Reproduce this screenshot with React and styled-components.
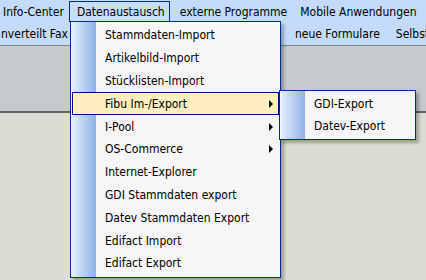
import React from "react";
import styled, { createGlobalStyle } from "styled-components";

const GlobalStyle = createGlobalStyle`
  html, body {
    margin: 0;
    padding: 0;
  }
  body {
    font-family: "DejaVu Sans Condensed", "DejaVu Sans", sans-serif;
    font-size: 12px;
    color: #000;
  }
`;

const Screen = styled.div`
  position: relative;
  width: 426px;
  height: 280px;
  overflow: hidden;
  background: #dcdcd4;
`;

const MenuBar = styled.div`
  display: flex;
  height: 22px;
  background: #c3daf9;
  margin-left: -5px;
  white-space: nowrap;
`;

const BarItem = styled.div`
  display: flex;
  align-items: center;
  padding: 0 4px 0 7px;
  margin-right: ${(p) => (p.$open ? 2 : 0)}px;
  border: 1px solid ${(p) => (p.$open ? "#002d96" : "transparent")};
  border-bottom: none;
  margin-top: 1px;
  background: ${(p) => (p.$open ? "#c9ddf8" : "transparent")};
`;

const ToolBar = styled.div`
  display: flex;
  height: 23px;
  align-items: center;
  background: #c3daf9;
  white-space: nowrap;
`;

const ToolItem = styled.div`
  padding: 0 ${(p) => p.$pr || 0}px 0 ${(p) => p.$pl || 0}px;
`;

const Divider = styled.div`
  height: 1px;
  background: #7d8286;
`;

const GreyPanel = styled.div`
  height: 65px;
  background: #c6cacd;
  border-bottom: 2px solid #5d6266;
`;

const Menu = styled.div`
  position: absolute;
  left: ${(p) => p.$left}px;
  top: ${(p) => p.$top}px;
  width: ${(p) => p.$width}px;
  border: 1px solid #002d96;
  background: #f6f6f6;
  padding: 2px 0;
  box-shadow: 3px 3px 3px rgba(0, 0, 0, 0.28);
  z-index: ${(p) => p.$z || 1};

  &::before {
    content: "";
    position: absolute;
    left: 1px;
    top: 0;
    bottom: 0;
    width: 24px;
    background: linear-gradient(to right, #e3effe, #8fb1e6);
  }
`;

const Item = styled.div`
  position: relative;
  display: flex;
  align-items: center;
  height: ${(p) => p.$h}px;
  margin: 0 1px;
  padding-left: ${(p) => p.$indent}px;
  border: 1px solid ${(p) => (p.$active ? "#000080" : "transparent")};
  background: ${(p) => (p.$active ? "#ffeec2" : "transparent")};
  box-sizing: border-box;
  white-space: nowrap;
`;

const Arrow = styled.span`
  position: absolute;
  right: 5px;
  top: 50%;
  margin-top: -4px;
  width: 0;
  height: 0;
  border-top: 4px solid transparent;
  border-bottom: 4px solid transparent;
  border-left: 4px solid #000;
`;

const mainItems = [
  { label: "Stammdaten-Import" },
  { label: "Artikelbild-Import" },
  { label: "Stücklisten-Import" },
  { label: "Fibu Im-/Export", sub: true, active: true },
  { label: "I-Pool", sub: true },
  { label: "OS-Commerce", sub: true },
  { label: "Internet-Explorer" },
  { label: "GDI Stammdaten export" },
  { label: "Datev Stammdaten Export" },
  { label: "Edifact Import" },
  { label: "Edifact Export" },
];

const subItems = ["GDI-Export", "Datev-Export"];

export default function App() {
  return (
    <Screen>
      <GlobalStyle />
      <MenuBar>
        <BarItem>Info-Center</BarItem>
        <BarItem $open>Datenaustausch</BarItem>
        <BarItem>externe Programme</BarItem>
        <BarItem>Mobile Anwendungen</BarItem>
      </MenuBar>
      <ToolBar>
        <ToolItem $pl={1} $pr={227}>nverteilt Fax</ToolItem>
        <ToolItem $pr={16}>neue Formulare</ToolItem>
        <ToolItem>Selbstbedienung</ToolItem>
      </ToolBar>
      <Divider />
      <GreyPanel />

      <Menu $left={70} $top={21} $width={209}>
        {mainItems.map((it) => (
          <Item key={it.label} $h={22.8} $indent={32} $active={it.active}>
            {it.label}
            {it.sub && <Arrow />}
          </Item>
        ))}
      </Menu>

      <Menu $left={279} $top={90} $width={135} $z={2}>
        {subItems.map((label) => (
          <Item key={label} $h={22} $indent={32}>
            {label}
          </Item>
        ))}
      </Menu>
    </Screen>
  );
}
